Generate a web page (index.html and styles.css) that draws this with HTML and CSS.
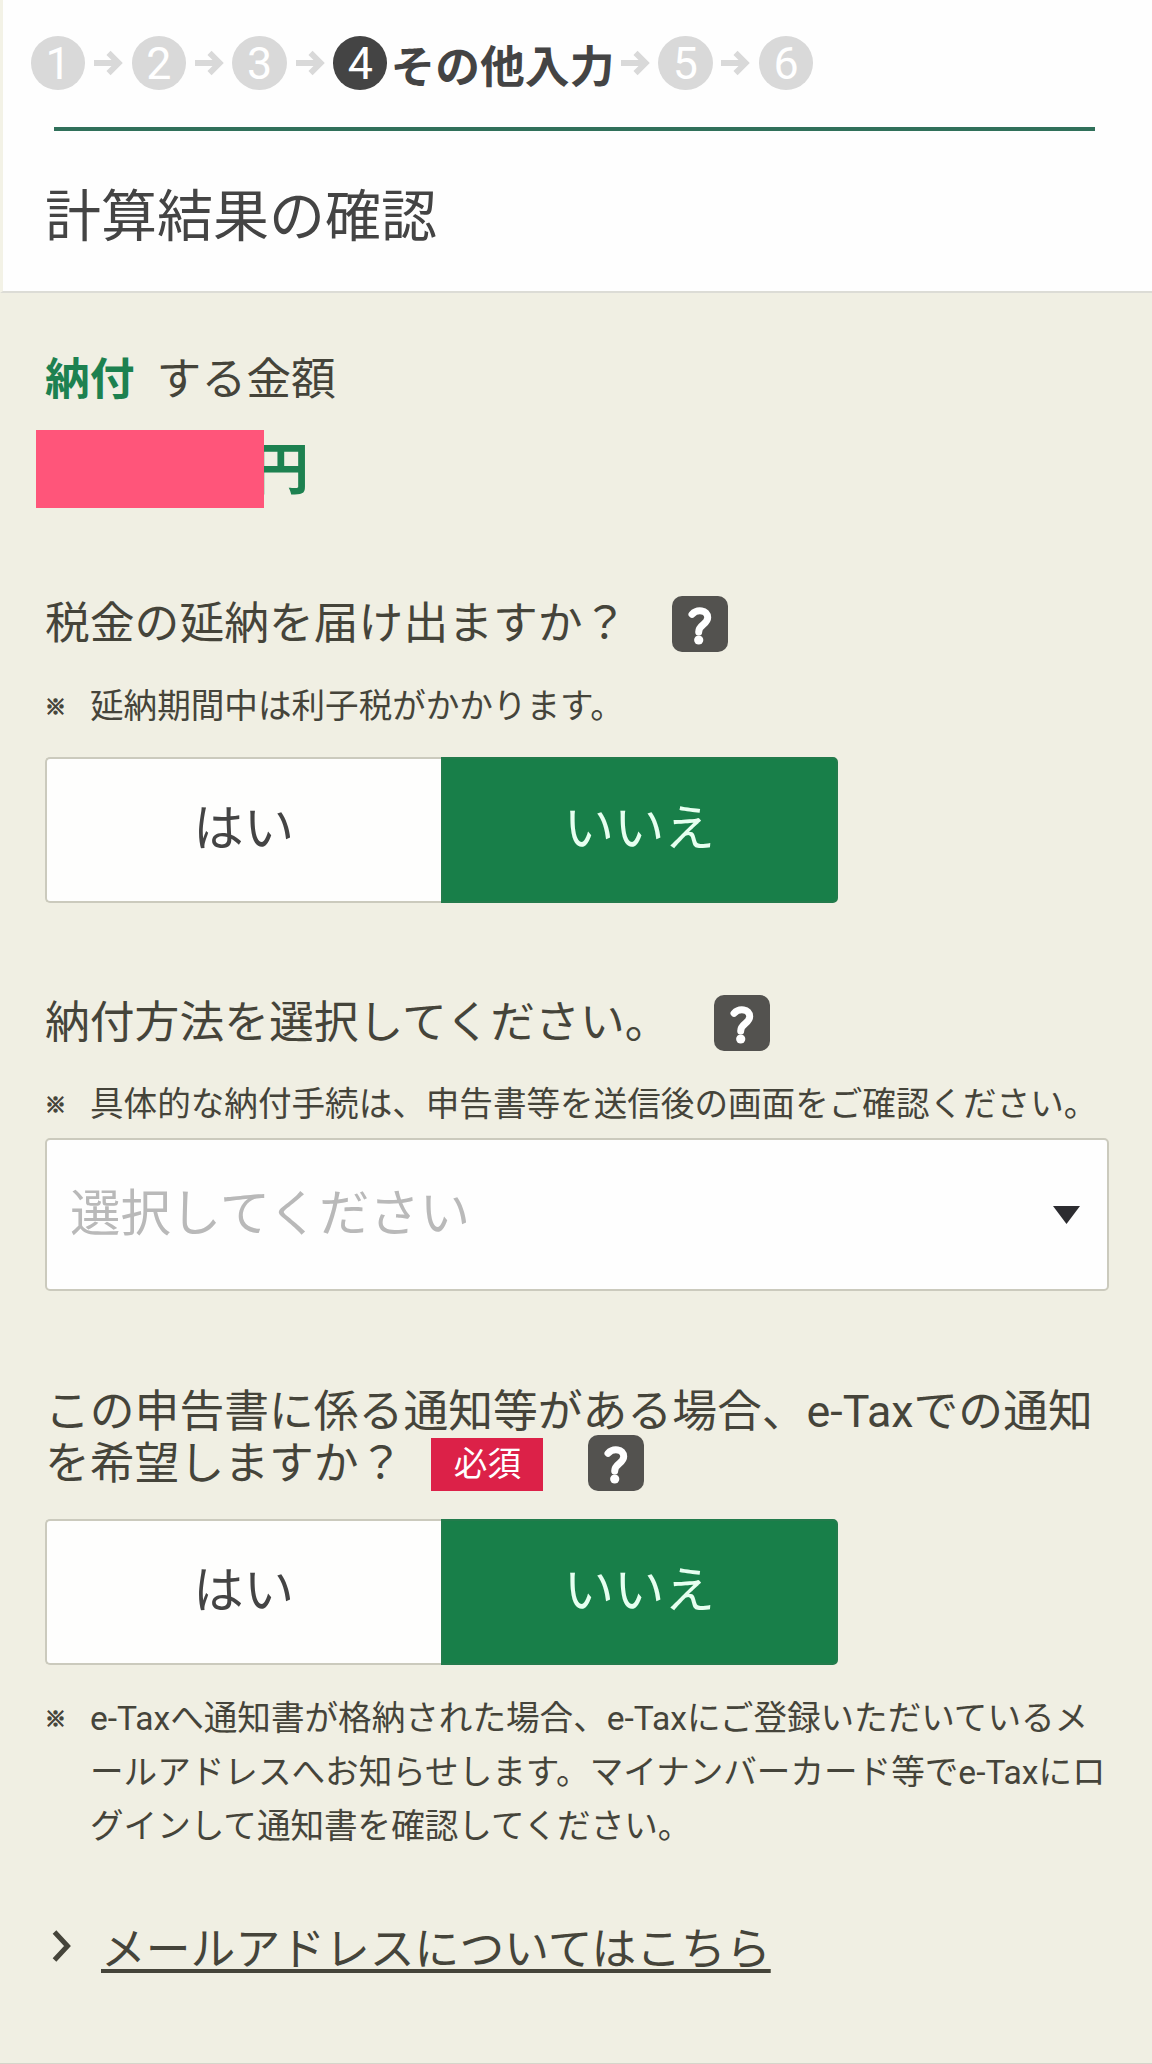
FILE: index.html
```html
<!DOCTYPE html>
<html lang="ja">
<head>
<meta charset="utf-8">
<title>計算結果の確認</title>
<link rel="stylesheet" href="styles.css">
</head>
<body>
<svg class="defs" width="0" height="0" aria-hidden="true">
  <symbol id="arrow" viewBox="0 0 30 26"><path d="M0 13H25M15 2.5L25.5 13L15 23.5" fill="none" stroke="currentColor" stroke-width="6"/></symbol>
  <symbol id="help" viewBox="0 0 56 56"><path d="M20 18.3C25 13 35.7 13.6 35.7 21.6C35.7 28.6 26.7 28.6 26.7 36" fill="none" stroke="#fff" stroke-width="7" stroke-linecap="round"/><circle cx="26.7" cy="44" r="4.6" fill="#fff"/></symbol>
</svg>
<header class="header">
  <ol class="steps">
    <li class="step">1</li>
    <li class="arrow"><svg><use href="#arrow"/></svg></li>
    <li class="step">2</li>
    <li class="arrow"><svg><use href="#arrow"/></svg></li>
    <li class="step">3</li>
    <li class="arrow"><svg><use href="#arrow"/></svg></li>
    <li class="step current">4</li>
    <li class="step-name">その他入力</li>
    <li class="arrow"><svg><use href="#arrow"/></svg></li>
    <li class="step">5</li>
    <li class="arrow"><svg><use href="#arrow"/></svg></li>
    <li class="step">6</li>
  </ol>
  <h1 class="title">計算結果の確認</h1>
</header>
<main class="main">
  <p class="pay"><strong>納付</strong><span>する金額</span></p>
  <div class="amount"><span class="mask"></span><span class="yen">円</span></div>

  <section class="q1">
    <h2 class="question">税金の延納を届け出ますか？<span class="help"><svg><use href="#help"/></svg></span></h2>
    <div class="note"><span class="mark">※</span><p>延納期間中は利子税がかかります。</p></div>
    <div class="choice"><button class="opt">はい</button><button class="opt on">いいえ</button></div>
  </section>

  <section class="q2">
    <h2 class="question">納付方法を選択してください。<span class="help"><svg><use href="#help"/></svg></span></h2>
    <div class="note"><span class="mark">※</span><p>具体的な納付手続は、申告書等を送信後の画面をご確認ください。</p></div>
    <div class="select"><span>選択してください</span><svg class="caret" viewBox="0 0 27 18"><path d="M0 0H27L13.5 18Z" fill="#2c2c30"/></svg></div>
  </section>

  <section class="q3">
    <h2 class="question long">
      <span>この申告書に係る通知等がある場合、e-Taxでの通知</span>
      <span class="line">を希望しますか？<span class="required">必須</span><span class="help"><svg><use href="#help"/></svg></span></span>
    </h2>
    <div class="choice"><button class="opt">はい</button><button class="opt on">いいえ</button></div>
    <div class="note"><span class="mark">※</span><p>e-Taxへ通知書が格納された場合、e-Taxにご登録いただいているメ<br>ールアドレスへお知らせします。マイナンバーカード等でe-Taxにロ<br>グインして通知書を確認してください。</p></div>
  </section>

  <div class="more"><svg viewBox="0 0 20 32"><path d="M2.5 2L15.5 16L2.5 30" fill="none" stroke="currentColor" stroke-width="5"/></svg><a>メールアドレスについてはこちら</a></div>
</main>
</body>
</html>
```
FILE: styles.css
```css
* { box-sizing: border-box; margin: 0; padding: 0; }

body {
  width: 1152px;
  height: 2064px;
  display: flex;
  flex-direction: column;
  overflow: hidden;
  background: #f0efe3;
  color: #45443a;
  font-family: Roboto, "Noto Sans CJK JP", sans-serif;
  font-size: 44.8px;
}

.defs { display: none; }
svg { display: block; width: 100%; height: 100%; }

.header {
  height: 293px;
  padding-top: 36px;
  border-bottom: 2px solid #dcdcd6;
  border-left: 3px solid #f3f2e6;
  background: #fefefe;
  color: #444;
}

.steps {
  display: flex;
  align-items: center;
  height: 54px;
  padding-left: 28px;
  list-style: none;
}

.step {
  width: 54.4px;
  height: 54px;
  border-radius: 50%;
  background: #d9d9d9;
  color: #fff;
  line-height: 55px;
  text-align: center;
}

.step.current { background: #444; }

.arrow {
  width: 29px;
  height: 26px;
  margin: 0 8.5px 0 8.8px;
  color: #d9d9d9;
}

.step-name {
  margin: 0 -2.5px 0 3px;
  font-weight: 700;
  line-height: 54px;
  padding-top: 9px;
}

.title {
  margin: 37px 57px 0 51px;
  padding-top: 51px;
  border-top: 4px solid #30705a;
  font-size: 56px;
  font-weight: 400;
  line-height: 70px;
  text-indent: -9px;
}

.main {
  flex: 1;
  padding: 57px 43px 0 45px;
  border-bottom: 1px solid #d5d5ca;
}

.pay { display: flex; gap: 22px; line-height: 60px; }
.pay strong { color: #1d8150; font-weight: 700; }

.amount {
  display: flex;
  align-items: center;
  height: 78px;
  margin: 20px 0 0 -9px;
}

.mask { position: relative; z-index: 1; width: 228px; height: 78px; background: #ff557a; }
.yen { margin-left: -11px; color: #1d8150; font-size: 56px; font-weight: 700; line-height: 78px; padding-top: 2px; }

.q1 { margin-top: 88px; }
.q2 { margin-top: 92px; }
.q3 { margin-top: 95px; }

.question {
  display: flex;
  align-items: center;
  height: 56px;
  font-size: 44.8px;
  font-weight: 400;
  line-height: 56px;
  white-space: nowrap;
}

.help {
  width: 56px;
  height: 56px;
  margin-left: 45px;
  border-radius: 10px;
  background: #53524f;
}

.question.long { display: block; height: 104px; line-height: 52px; }
.question.long > span { display: flex; height: 52px; align-items: center; }
.long .help { margin-top: -2px; }

.required {
  width: 112px;
  height: 53px;
  margin-left: 28px;
  background: #dc2148;
  color: #fff;
  font-size: 33.6px;
  line-height: 53px;
  text-align: center;
}

.note {
  display: grid;
  grid-template-columns: 45px 1fr;
  margin-top: 28px;
  font-size: 33.6px;
  line-height: 54px;
  white-space: nowrap;
}

.mark { font-size: 21px; font-weight: 700; -webkit-text-stroke: 1.1px #45443a; }
.q2 .note { margin-top: 27px; }
.q3 .note { margin-top: 27px; }

.choice { display: flex; width: 793px; height: 146px; margin-top: 23px; }
.q3 .choice { margin-top: 29px; }

.opt {
  flex: 1;
  padding-bottom: 11px;
  border: 2px solid #cbcabd;
  border-right: 0;
  border-radius: 5px 0 0 5px;
  background: #fefefd;
  color: #444;
  font: inherit;
  font-size: 50.4px;
}

.opt.on {
  border: 2px solid #237b4c;
  border-radius: 0 5px 5px 0;
  background: #187f49;
  color: #e6fff0;
}

.select {
  display: flex;
  align-items: center;
  justify-content: space-between;
  height: 153px;
  margin-top: 6px;
  padding: 0 27px 0 23px;
  border: 2px solid #cbcabd;
  border-radius: 5px;
  background: #fefefe;
  color: #b9b9b9;
  font-size: 50.4px;
}

.select span { padding-bottom: 10px; }
.caret { width: 27px; height: 18px; }

.more {
  display: flex;
  align-items: center;
  height: 60px;
  margin-top: 66px;
}

.more svg { width: 20px; height: 32px; margin: -8px 29px 0 7px; }

.more a {
  line-height: 60px;
  text-decoration: underline;
  text-decoration-thickness: 4px;
  text-underline-offset: 4px;
  text-decoration-skip-ink: none;
}
```
